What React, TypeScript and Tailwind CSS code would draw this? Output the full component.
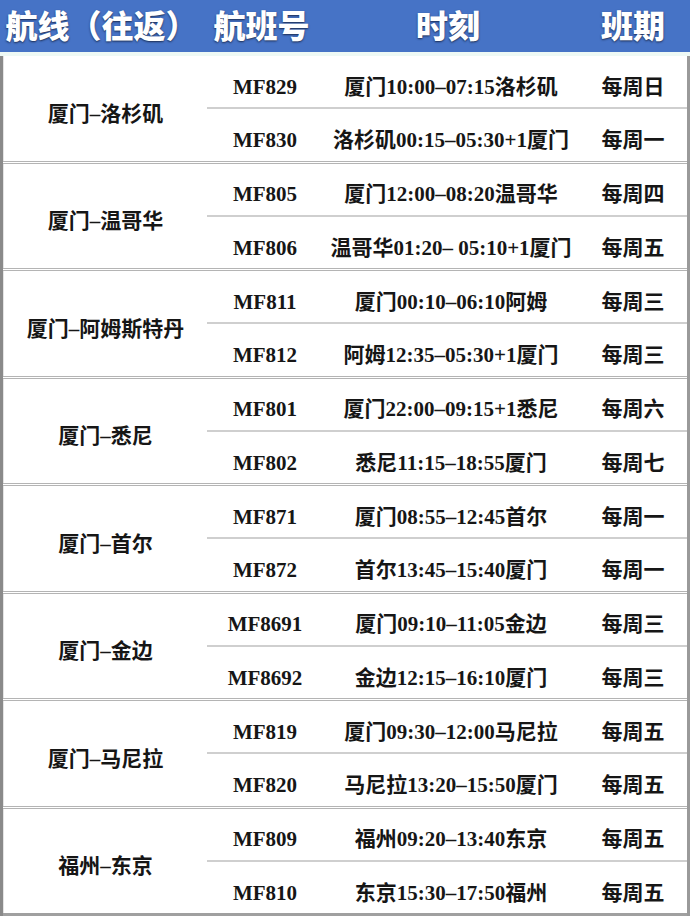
const groups = [
  {
    route: '厦门–洛杉矶',
    flights: [
      { no: 'MF829', time: '厦门10:00–07:15洛杉矶', day: '每周日' },
      { no: 'MF830', time: '洛杉矶00:15–05:30+1厦门', day: '每周一' },
    ],
  },
  {
    route: '厦门–温哥华',
    flights: [
      { no: 'MF805', time: '厦门12:00–08:20温哥华', day: '每周四' },
      { no: 'MF806', time: '温哥华01:20– 05:10+1厦门', day: '每周五' },
    ],
  },
  {
    route: '厦门–阿姆斯特丹',
    flights: [
      { no: 'MF811', time: '厦门00:10–06:10阿姆', day: '每周三' },
      { no: 'MF812', time: '阿姆12:35–05:30+1厦门', day: '每周三' },
    ],
  },
  {
    route: '厦门–悉尼',
    flights: [
      { no: 'MF801', time: '厦门22:00–09:15+1悉尼', day: '每周六' },
      { no: 'MF802', time: '悉尼11:15–18:55厦门', day: '每周七' },
    ],
  },
  {
    route: '厦门–首尔',
    flights: [
      { no: 'MF871', time: '厦门08:55–12:45首尔', day: '每周一' },
      { no: 'MF872', time: '首尔13:45–15:40厦门', day: '每周一' },
    ],
  },
  {
    route: '厦门–金边',
    flights: [
      { no: 'MF8691', time: '厦门09:10–11:05金边', day: '每周三' },
      { no: 'MF8692', time: '金边12:15–16:10厦门', day: '每周三' },
    ],
  },
  {
    route: '厦门–马尼拉',
    flights: [
      { no: 'MF819', time: '厦门09:30–12:00马尼拉', day: '每周五' },
      { no: 'MF820', time: '马尼拉13:20–15:50厦门', day: '每周五' },
    ],
  },
  {
    route: '福州–东京',
    flights: [
      { no: 'MF809', time: '福州09:20–13:40东京', day: '每周五' },
      { no: 'MF810', time: '东京15:30–17:50福州', day: '每周五' },
    ],
  },
];

const headFont = { fontFamily: '"Noto Sans CJK SC", sans-serif' };
const bodyFont = { fontFamily: '"Liberation Serif", "Noto Sans CJK SC", serif' };

export default function App() {
  return (
    <div className="w-[690px] h-[916px] flex flex-col bg-white overflow-hidden">
      {/* header */}
      <div
        className="h-[52px] flex items-center pb-[5px] bg-[#4673c6] text-white text-[32px] font-black [text-shadow:0_1px_2px_rgba(20,30,60,0.85)]"
        style={headFont}
      >
        <div className="w-[203px] text-center">航线（往返）</div>
        <div className="w-[117px] text-center">航班号</div>
        <div className="w-[256px] text-center">时刻</div>
        <div className="flex-1 text-center">班期</div>
      </div>
      <div className="h-[4px] bg-[#eef9f5]" />

      {/* body */}
      <div
        className="flex-1 grid grid-rows-8 border-l-[3px] border-l-[#8a8a8a] border-r-[3px] border-r-[#9a9a9a] text-[21px] font-bold text-[#161616]"
        style={bodyFont}
      >
        {groups.map((g, i) => (
          <div
            key={g.route}
            className={`flex ${i < groups.length - 1 ? 'border-b-[3px] border-double border-b-[#b4b4b4]' : 'border-b-[3px] border-b-[#a0a0a0]'}`}
          >
            <div className="w-[204px] flex items-center justify-center pt-[12px] border-l border-l-[#e4e4e4]">
              {g.route}
            </div>
            <div className="flex-1 flex flex-col">
              {g.flights.map((f, j) => (
                <div
                  key={f.no}
                  className={`flex-1 flex items-center pt-[12px] ${j === 0 ? 'border-b-2 border-b-[#cfcfcf]' : ''}`}
                >
                  <div className="w-[116px] text-center">{f.no}</div>
                  <div className="w-[256px] text-center whitespace-pre">{f.time}</div>
                  <div className="flex-1 text-center">{f.day}</div>
                </div>
              ))}
            </div>
          </div>
        ))}
      </div>
    </div>
  );
}
